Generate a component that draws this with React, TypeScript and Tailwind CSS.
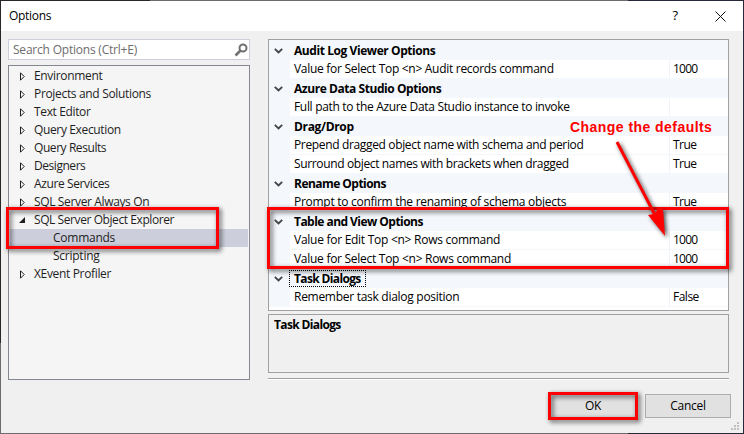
import React from "react";

const topics = [
  { text: "Environment", tracking: "tracking-[-0.33px]" },
  { text: "Projects and Solutions", tracking: "tracking-[-0.33px]" },
  { text: "Text Editor", tracking: "tracking-[-0.36px]" },
  { text: "Query Execution", tracking: "tracking-[-0.36px]" },
  { text: "Query Results", tracking: "tracking-[-0.43px]" },
  { text: "Designers", tracking: "tracking-[-0.45px]" },
  { text: "Azure Services", tracking: "tracking-[-0.39px]" },
  { text: "SQL Server Always On", tracking: "tracking-[-0.36px]" },
];

function Arrow({ open }: { open?: boolean }) {
  return (
    <svg className="ml-[9px] h-[9px] w-[6px] shrink-0 overflow-visible" viewBox="0 0 6 9">
      {open ? <path d="M6 1V7H0Z" fill="#1e1e1e" /> : <path d="M1.5 0.8V8.2L5.2 4.5Z" fill="none" stroke="#1e1e1e" strokeWidth="1" />}
    </svg>
  );
}

function TreeRow({ text, tracking, open }: { text: string; tracking: string; open?: boolean }) {
  return (
    <div className="flex h-[18px] items-center">
      <Arrow open={open} />
      <span className={`ml-[9px] ${tracking}`}>{text}</span>
    </div>
  );
}

function Group({ title, tracking, focused }: { title: string; tracking: string; focused?: boolean }) {
  return (
    <div className="flex h-[19px] items-center bg-[#f4f7fc] font-bold">
      <svg className="ml-[5px] h-[6px] w-[9px]" viewBox="0 0 9 6">
        <path d="M0.8 0.8L4.5 4.5L8.2 0.8" fill="none" stroke="#444" strokeWidth="1.8" />
      </svg>
      <span className={`${focused ? "ml-[6px] h-[17px] w-[77px] border border-dotted border-black pl-1 leading-[15px]" : "ml-[11px]"} ${tracking}`}>{title}</span>
    </div>
  );
}

function Item({ name, tracking, value }: { name: string; tracking: string; value?: string }) {
  return (
    <div className="flex h-[19px] bg-[#f4f7fc] leading-[18px]">
      <div className="ml-[21px] flex h-[18px] flex-1 bg-white">
        <span className={`w-[380px] border-r border-[#f0f3f9] pl-1 ${tracking}`}>{name}</span>
        <span className={`pl-[3px] ${value === "1000" ? "tracking-[-0.75px]" : "tracking-[-0.5px]"}`}>{value}</span>
      </div>
    </div>
  );
}

const frame = "absolute border-[3px] border-[#fe0000] [filter:drop-shadow(2px_2px_2.5px_rgba(0,0,0,0.7))]";

export default function App() {
  return (
    <div className="relative h-[434px] w-[744px] overflow-hidden whitespace-nowrap bg-[linear-gradient(#2a2526,#2a2526),linear-gradient(#252838,#252838),linear-gradient(90deg,#6c6b6e_628px,#252838_628px)] bg-[length:150px_343px,1px_100%,100%_100%] bg-[position:0_0,100%_0,0_0] bg-no-repeat p-px font-['Open_Sans','Noto_Sans',sans-serif] text-[12px] text-black">
      <div className="flex h-[432px] flex-col bg-[#f0f0f0]">
        <div className="flex h-[30px] shrink-0 items-center bg-white pl-2">
          <span className="flex-1 tracking-[-0.3px]">Options</span>
          <span className="mr-[37px] text-[13px]">?</span>
          <svg className="mr-[17px] h-[11px] w-[11px]" viewBox="0 0 11 11"><path d="M0.5 0.5L10.5 10.5M10.5 0.5L0.5 10.5" stroke="#111" fill="none" /></svg>
        </div>
        <div className="flex h-[350px] shrink-0 pl-[7px] pt-2">
          <div className="w-[242px]">
            <div className="flex h-[21px] items-center border border-[#cccedb] bg-white pl-1 text-[#6d6d6d]">
              <span className="flex-1 tracking-[-0.21px]">Search Options (Ctrl+E)</span>
              <svg className="mr-[1px] h-[14px] w-[14px]" viewBox="0 0 14 14"><circle cx="9" cy="5" r="3.5" fill="none" stroke="#717171" strokeWidth="2" /><path d="M6.5 7.5L1.5 12.5" stroke="#717171" strokeWidth="2.6" /></svg>
            </div>
            <div className="mt-[5px] h-[315px] border border-[#828790] bg-[#f5f5f5] p-px text-[#1e1e1e]">
              {topics.map((t) => <TreeRow key={t.text} text={t.text} tracking={t.tracking} />)}
              <TreeRow text="SQL Server Object Explorer" tracking="tracking-[-0.42px]" open />
              <div className="h-[18px] bg-[#cccedb] pl-[43px] leading-[18px] tracking-[-0.25px]">Commands</div>
              <div className="h-[18px] pl-[43px] leading-[18px] tracking-[-0.25px]">Scripting</div>
              <TreeRow text="XEvent Profiler" tracking="tracking-[-0.34px]" />
            </div>
          </div>
          <div className="ml-[18px] w-[461px]">
            <div className="h-[272px] border border-[#a0a0a0] bg-white">
              <div className="h-px bg-[#f4f7fc]" />
              <Group title="Audit Log Viewer Options" tracking="tracking-[-0.43px]" />
              <Item name="Value for Select Top <n> Audit records command" tracking="tracking-[-0.29px]" value="1000" />
              <Group title="Azure Data Studio Options" tracking="tracking-[-0.44px]" />
              <Item name="Full path to the Azure Data Studio instance to invoke" tracking="tracking-[-0.32px]" />
              <Group title="Drag/Drop" tracking="tracking-[-0.33px]" />
              <Item name="Prepend dragged object name with schema and period" tracking="tracking-[-0.35px]" value="True" />
              <Item name="Surround object names with brackets when dragged" tracking="tracking-[-0.36px]" value="True" />
              <Group title="Rename Options" tracking="tracking-[-0.54px]" />
              <Item name="Prompt to confirm the renaming of schema objects" tracking="tracking-[-0.28px]" value="True" />
              <Group title="Table and View Options" tracking="tracking-[-0.54px]" />
              <Item name="Value for Edit Top <n> Rows command" tracking="tracking-[-0.27px]" value="1000" />
              <Item name="Value for Select Top <n> Rows command" tracking="tracking-[-0.28px]" value="1000" />
              <Group title="Task Dialogs" tracking="tracking-[-0.64px]" focused />
              <Item name="Remember task dialog position" tracking="tracking-[-0.28px]" value="False" />
            </div>
            <div className="mt-[3px] h-[59px] border border-[#a0a0a0] pl-[5px] pt-px font-bold tracking-[-0.64px]">Task Dialogs</div>
            <div className="mt-[5px] h-[2px] border-b border-t border-b-white border-t-[#a0a0a0]" />
          </div>
        </div>
        <div className="mt-[13px] flex justify-end gap-[9px] pr-[12px] tracking-[-0.3px]">
          <button className="h-[24px] w-[86px] border border-[#0060a8] bg-[#e1e1e1]">OK</button>
          <button className="h-[24px] w-[86px] border border-[#adadad] bg-[#e1e1e1]">Cancel</button>
        </div>
        <svg className="ml-auto mr-[3px] mt-[4px] h-[9px] w-[9px]" viewBox="0 0 9 9" fill="#bfbfbf" shapeRendering="crispEdges">
          <path d="M6 0h2v2h-2zM3 3h2v2h-2zM6 3h2v2h-2zM0 6h2v2h-2zM3 6h2v2h-2zM6 6h2v2h-2z" />
        </svg>
      </div>

      <div className={`${frame} left-[6px] top-[207px] h-[42px] w-[213px]`} />
      <div className={`${frame} left-[267px] top-[207px] h-[62px] w-[462px]`} />
      <div className={`${frame} left-[548px] top-[392px] h-[28px] w-[90px]`} />
      <div className="absolute left-[570px] top-[117px] font-['Liberation_Sans',sans-serif] text-[14px] font-bold leading-[20px] tracking-[0.45px] text-[#fe0000]">Change the defaults</div>
      <svg className="absolute left-[600px] top-[130px] h-[120px] w-[80px] [filter:drop-shadow(2px_2px_2px_rgba(0,0,0,0.7))]" viewBox="600 130 80 120">
        <path d="M617 142L655 215" stroke="#fe0000" strokeWidth="3" />
        <path d="M665 236L648 215L654 214L659 208L663 209Z" fill="#fe0000" />
      </svg>
    </div>
  );
}
